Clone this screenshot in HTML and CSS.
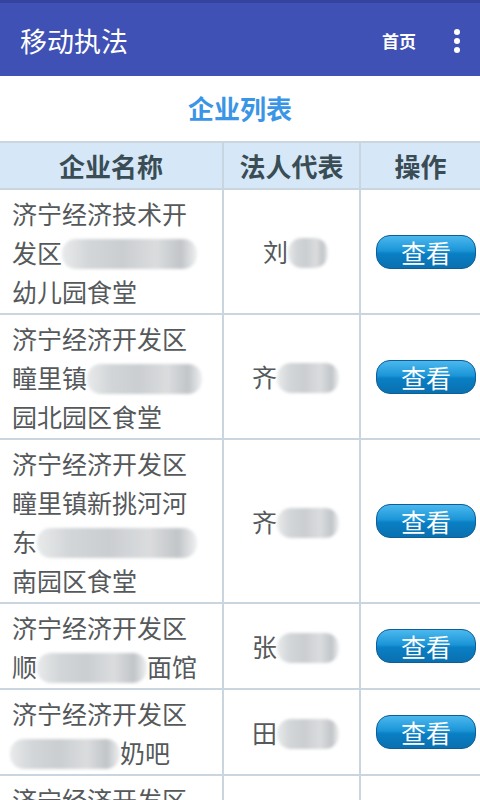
FILE: index.html
```html
<!DOCTYPE html>
<html lang="zh">
<head>
<meta charset="utf-8">
<title>移动执法</title>
<link rel="stylesheet" href="styles.css">
</head>
<body>
<header class="appbar">
  <div class="appbar-title">移动执法</div>
  <div class="appbar-actions">
    <span class="home">首页</span>
    <svg class="more" width="8" height="24" viewBox="0 0 8 24"><circle cx="4" cy="3" r="3" fill="#fff"/><circle cx="4" cy="12" r="3" fill="#fff"/><circle cx="4" cy="21" r="3" fill="#fff"/></svg>
  </div>
</header>
<h1 class="page-title">企业列表</h1>
<table class="list">
  <thead>
    <tr><th class="c1">企业名称</th><th class="c2">法人代表</th><th class="c3">操作</th></tr>
  </thead>
  <tbody>
    <tr>
      <td class="name">济宁经济技术开<br>发区<span class="mask m135"></span><br>幼儿园食堂</td>
      <td class="person">刘<span class="mask m40"></span></td>
      <td class="op"><button class="view">查看</button></td>
    </tr>
    <tr>
      <td class="name">济宁经济开发区<br>瞳里镇<span class="mask m115"></span><br>园北园区食堂</td>
      <td class="person">齐<span class="mask m62"></span></td>
      <td class="op"><button class="view">查看</button></td>
    </tr>
    <tr>
      <td class="name">济宁经济开发区<br>瞳里镇新挑河河<br>东<span class="mask m160"></span><br>南园区食堂</td>
      <td class="person">齐<span class="mask m62"></span></td>
      <td class="op"><button class="view">查看</button></td>
    </tr>
    <tr>
      <td class="name">济宁经济开发区<br>顺<span class="mask m110"></span>面馆</td>
      <td class="person">张<span class="mask m62"></span></td>
      <td class="op"><button class="view">查看</button></td>
    </tr>
    <tr>
      <td class="name">济宁经济开发区<br><span class="mask m110 lead"></span>奶吧</td>
      <td class="person">田<span class="mask m62"></span></td>
      <td class="op"><button class="view">查看</button></td>
    </tr>
    <tr>
      <td class="name">济宁经济开发区</td>
      <td class="person"></td>
      <td class="op"></td>
    </tr>
  </tbody>
</table>
</body>
</html>
```
FILE: styles.css
```css
html, body {
  margin: 0;
  padding: 0;
  background: #ffffff;
  font-family: "Noto Sans CJK SC", "Noto Sans", sans-serif;
  width: 480px;
  height: 800px;
  overflow: hidden;
}

.appbar {
  height: 76px;
  box-sizing: border-box;
  background: #3f51b5;
  border-top: 3px solid #3443a0;
  display: flex;
  align-items: center;
  justify-content: space-between;
  padding: 0 19px 0 20px;
  color: #ffffff;
}

.appbar-title {
  font-size: 27px;
  line-height: 1;
  margin-top: 2px;
}

.appbar-actions {
  display: flex;
  align-items: center;
  gap: 37px;
  margin-top: 2px;
}

.home {
  font-size: 17px;
  font-weight: bold;
}

.more {
  display: block;
}

.page-title {
  margin: 0;
  height: 65px;
  display: flex;
  align-items: center;
  justify-content: center;
  font-size: 26px;
  font-weight: bold;
  color: #3b95e6;
  padding-bottom: 3px;
  box-sizing: border-box;
}

.list {
  width: 480px;
  border-collapse: collapse;
  table-layout: fixed;
}

.list th, .list td {
  border: 2px solid #c9d6e0;
}

.list tr > :first-child { border-left: none; }
.list tr > :last-child { border-right: none; }

.list th {
  background: #d6e8f8;
  color: #3a4d55;
  font-size: 26px;
  font-weight: bold;
  height: 45px;
  padding: 0;
  line-height: 45px;
}

.c1 { width: 222px; }
.c2 { width: 135px; }

.list td {
  color: #55595b;
  font-size: 25px;
  line-height: 39px;
  vertical-align: middle;
}

.list td.name {
  padding: 4px 6px 2px 12px;
  white-space: nowrap;
}

.list td.person {
  text-align: center;
  padding: 0 0 0 8px;
  white-space: nowrap;
}

.list td.op {
  padding: 0 0 0 15px;
}

.mask {
  display: inline-block;
  height: 30px;
  vertical-align: -6px;
  border-radius: 14px;
  background: linear-gradient(90deg, #e8eaeb 0%, #d3d6d8 20%, #cbced1 45%, #dadcde 70%, #c2c5c8 88%, #eef0f1 100%);
  filter: blur(1.5px);
}

.mask.lead { margin-left: -2px; }
.m40 { width: 40px; }
.m62 { width: 62px; }
.m110 { width: 110px; }
.m115 { width: 115px; }
.m135 { width: 135px; }
.m160 { width: 160px; }

.view {
  display: block;
  width: 100px;
  height: 34px;
  padding: 0;
  border: 1px solid #0e5f98;
  border-radius: 14px;
  background: linear-gradient(180deg, #4bb8ee 0%, #1c96d8 45%, #0a7fc4 55%, #0a70b0 100%);
  color: #ffffff;
  font-family: "Noto Sans CJK SC", "Noto Sans", sans-serif;
  font-size: 25px;
  line-height: 32px;
}
```
